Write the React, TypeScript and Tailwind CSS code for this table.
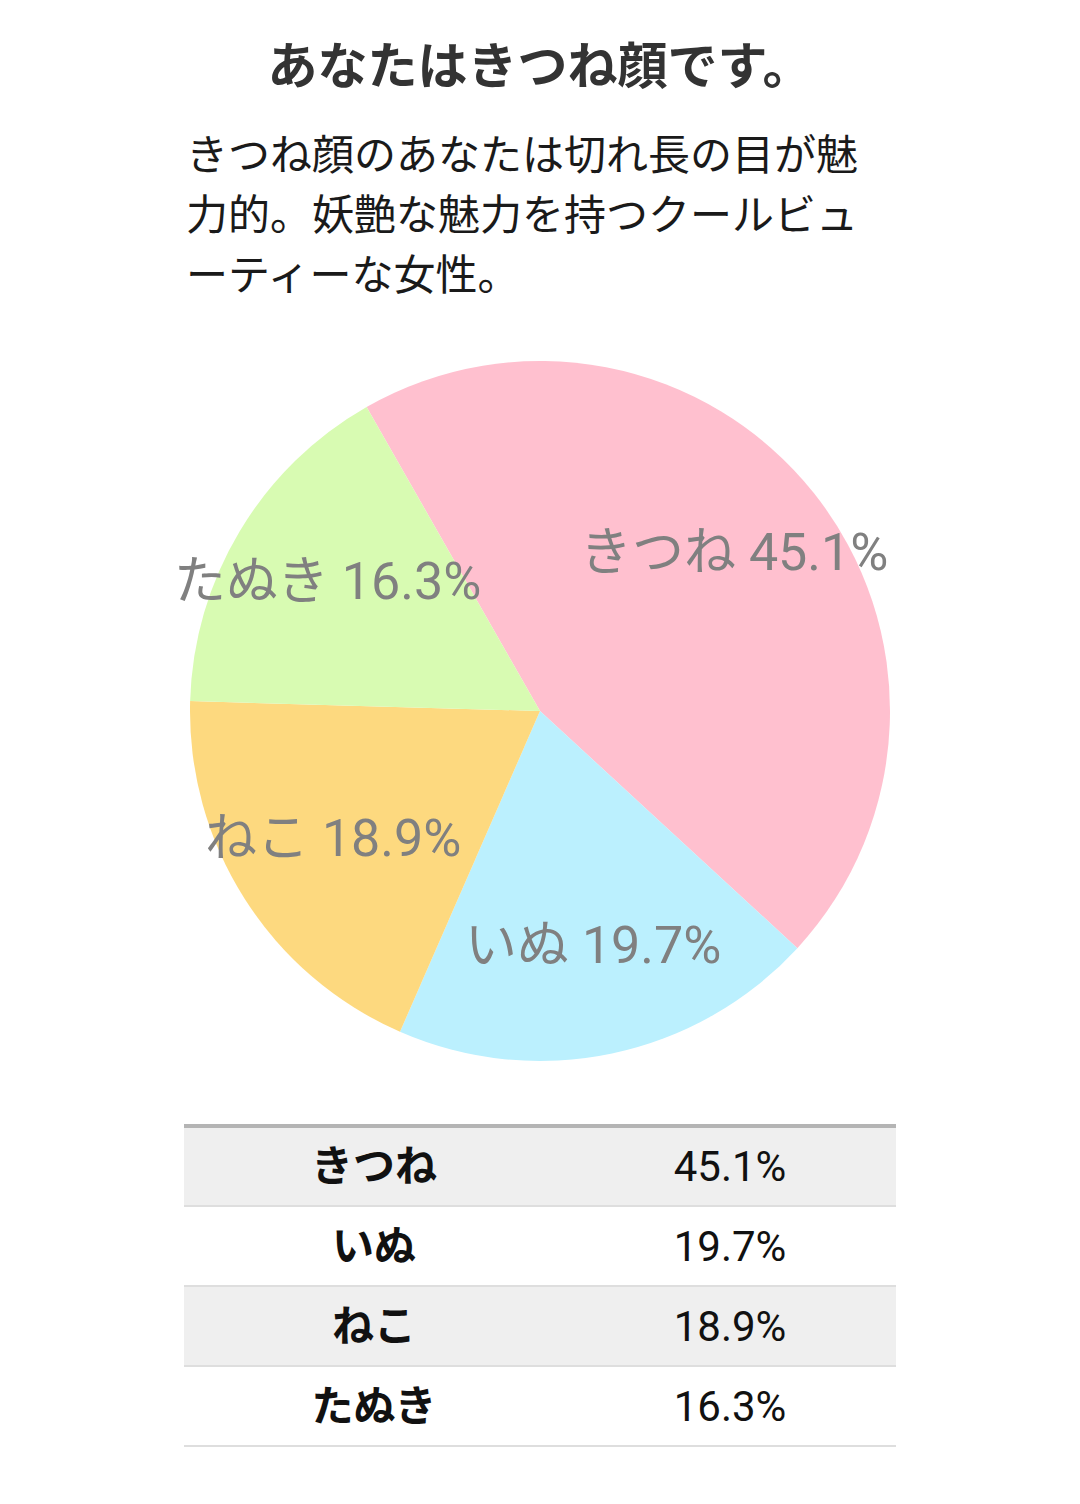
import React from "react";

const CX = 540;
const CY = 356;
const R = 350;

const slices = [
  { name: "きつね", pct: 45.1, color: "#FFC0CF" },
  { name: "いぬ", pct: 19.7, color: "#BBF0FE" },
  { name: "ねこ", pct: 18.9, color: "#FDD97F" },
  { name: "たぬき", pct: 16.3, color: "#D8FBB2" },
];

const labels = [
  { text: "きつね 45.1%", x: 580, y: 215 },
  { text: "たぬき 16.3%", x: 174, y: 244 },
  { text: "ねこ 18.9%", x: 205, y: 501 },
  { text: "いぬ 19.7%", x: 465, y: 608 },
];

function pt(deg: number) {
  const a = (deg * Math.PI) / 180;
  return [CX + R * Math.sin(a), CY - R * Math.cos(a)];
}

function Pie() {
  let start = -29.7;
  const paths = slices.map((s) => {
    const sweep = (s.pct / 100) * 360;
    const end = start + sweep;
    const [x1, y1] = pt(start);
    const [x2, y2] = pt(end);
    const large = sweep > 180 ? 1 : 0;
    const d = `M ${CX} ${CY} L ${x1} ${y1} A ${R} ${R} 0 ${large} 1 ${x2} ${y2} Z`;
    start = end;
    return <path key={s.name} d={d} fill={s.color} />;
  });
  return (
    <svg width="1080" height="712" viewBox="0 0 1080 712" className="block">
      {paths}
      {labels.map((l) => (
        <text
          key={l.text}
          x={l.x}
          y={l.y}
          fill="#808080"
          fontSize="52"
          fontFamily="Roboto, 'Noto Sans CJK JP', sans-serif"
        >
          {l.text}
        </text>
      ))}
    </svg>
  );
}

export default function App() {
  return (
    <div className="w-[1080px] min-h-[1504px] bg-white pt-[34px] font-['Roboto','Noto_Sans_CJK_JP',sans-serif]">
      <div className="mx-auto w-[712px]">
        <h1 className="text-center text-[50px] leading-[66px] font-bold text-[#333333]">
          あなたはきつね顔です。
        </h1>
        <p className="mt-[26px] w-[712px] pl-[2px] text-[42px] leading-[60px] text-[#1a1a1a]">
          きつね顔のあなたは切れ長の目が魅力的。妖艶な魅力を持つクールビューティーな女性。
        </p>
      </div>
      <div className="mt-[49px]">
        <Pie />
      </div>
      <div className="mx-auto mt-[57px] w-[712px]">
        <table className="w-full border-collapse border-t-4 border-[#b4b4b4] text-[42px] text-[#111111]">
          <tbody>
            {slices.map((s, i) => (
              <tr
                key={s.name}
                className={`h-[80px] border-b-2 border-[#dedede] ${i % 2 === 0 ? "bg-[#efefef]" : "bg-white"}`}
              >
                <td className="w-[380px] text-center font-bold">{s.name}</td>
                <td className="text-center">{s.pct.toFixed(1)}%</td>
              </tr>
            ))}
          </tbody>
        </table>
      </div>
    </div>
  );
}
